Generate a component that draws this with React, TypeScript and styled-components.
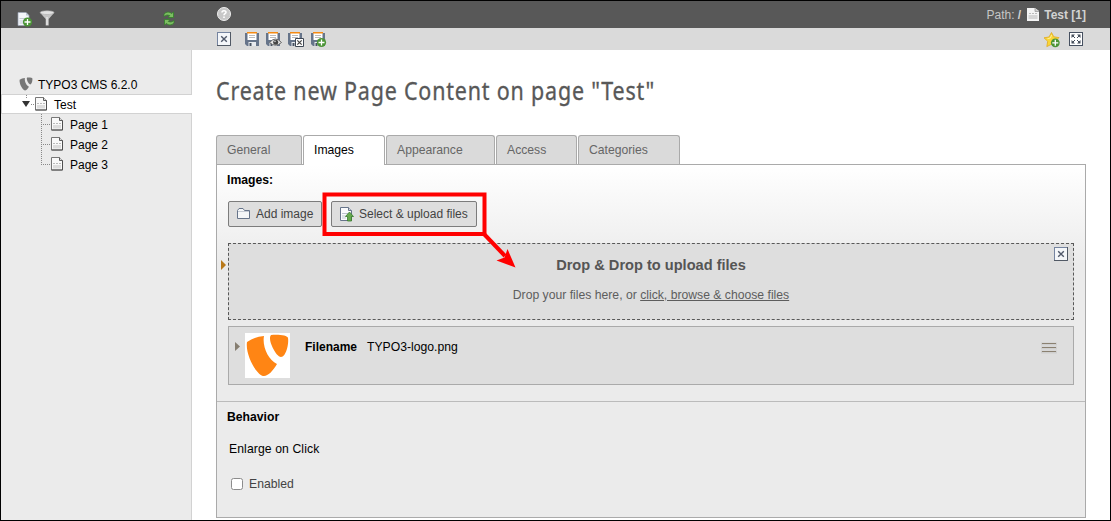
import React from "react";
import styled, { createGlobalStyle } from "styled-components";

const GlobalStyle = createGlobalStyle`
  * { box-sizing: border-box; }
  body { margin: 0; background: #fff; }
  svg { display: block; flex: none; }
`;

const Frame = styled.div`
  position: relative;
  width: 1111px;
  height: 521px;
  border: 1px solid #000;
  display: grid;
  grid-template-columns: 191px 1fr;
  grid-template-rows: 27px 22px 1fr;
  background: #fff;
  overflow: hidden;
  font: 12px/20px "Liberation Sans", Arial, sans-serif;
  color: #000;
`;

const DarkBar = styled.div<{ $left: number; $right: number; $top?: number }>`
  display: flex;
  align-items: flex-start;
  background: #585858;
  color: #c6c6c6;
  padding: ${(p) => p.$top ?? 0}px ${(p) => p.$right}px 0 ${(p) => p.$left}px;
`;

const LightBar = styled(DarkBar)`
  background: #dadada;
`;

const Spacer = styled.div<{ $w?: number }>`
  ${(p) => (p.$w ? `width: ${p.$w}px; flex: none;` : "flex: 1;")}
`;

const PathText = styled.div`
  display: flex;
  height: 27px;
  line-height: 28px;
  b { color: #d2d2d2; }
  svg { margin: 5px 4px 0 5px; }
`;

const Sidebar = styled.nav`
  background: #ebebeb;
  border-right: 1px solid #d2d2d2;
  padding-top: 25px;
`;

const RootRow = styled.div`
  display: flex;
  height: 19px;
  line-height: 20px;
  padding-left: 18px;
  svg { margin: 2px 5px 0 0; }
`;

const ActiveRow = styled.div`
  display: flex;
  height: 20px;
  width: 191px;
  line-height: 20px;
  padding-left: 20px;
  background: #fff;
  border: solid #d2d2d2;
  border-width: 1px 0 1px 1px;
  svg + svg { margin-top: 1px; }
  span { margin-left: 5px; }
`;

const ChildRow = styled.div`
  display: flex;
  height: 20px;
  line-height: 22px;
  padding-left: 40px;
  svg + svg { margin-top: 2px; }
  span { margin-left: 5px; }
`;

const Main = styled.main`
  padding: 0 24px 0 24px;
  font-size: 12.2px;
`;

const Title = styled.h1`
  margin: 0;
  padding-top: 20px;
  height: 85px;
  font: 400 26px/40px "Noto Sans", sans-serif;
  color: #585858;
  white-space: nowrap;
  -webkit-text-stroke: 0.35px #585858;
  span { display: inline-block; transform: scaleX(0.825); transform-origin: 0 0; letter-spacing: 1px; }
`;

const Tabs = styled.div`
  display: flex;
  gap: 1px;
  height: 29px;
`;

const Tab = styled.div<{ $w: number; $active?: boolean }>`
  width: ${(p) => p.$w}px;
  height: ${(p) => (p.$active ? 30 : 29)}px;
  padding-left: 10px;
  line-height: 28px;
  border: 1px solid #aaa;
  border-bottom: 0;
  border-radius: 3px 3px 0 0;
  background: ${(p) => (p.$active ? "#fff" : "#dadada")};
  color: ${(p) => (p.$active ? "#000" : "#666")};
  z-index: 1;
`;

const Panel = styled.div`
  border: 1px solid #aaa;
  height: 354px;
  background: linear-gradient(#fff, #ebebeb 100px);
`;

const Section = styled.section<{ $h: number }>`
  height: ${(p) => p.$h}px;
  padding: 5px 11px 0;
  & + & { border-top: 1px solid #bbb; }
`;

const SectionTitle = styled.div`
  font-weight: bold;
  margin-left: -1px;
`;

const Buttons = styled.div`
  display: flex;
  gap: 9px;
  margin: 11px 0 16px;
`;

const Button = styled.button<{ $w: number }>`
  display: flex;
  align-items: center;
  width: ${(p) => p.$w}px;
  height: 26px;
  padding: 0 0 0 7px;
  font: 12px/20px "Liberation Sans", Arial, sans-serif;
  color: #434343;
  background: #dedede;
  border: 1px solid #7c7c7c;
  border-radius: 2px;
  white-space: nowrap;
  svg { margin-right: 4px; }
`;

const DropZone = styled.div`
  position: relative;
  height: 77px;
  margin-bottom: 6px;
  padding-top: 10px;
  text-align: center;
  color: #5d5d5d;
  background: #dedede;
  border: 1px dashed #585858;
`;

const DropTitle = styled.div`
  font-size: 14.6px;
  font-weight: bold;
  color: #555;
  line-height: 22px;
  margin-bottom: 9px;
`;

const Corner = styled.div`
  position: absolute;
  top: 3px;
  right: 5px;
`;

const DropMarker = styled.div`
  position: absolute;
  left: -8px;
  top: 16px;
`;

const FileRow = styled.div`
  display: flex;
  height: 59px;
  padding: 6px 16px 0 6px;
  line-height: 28px;
  background: #dedede;
  border: 1px solid #aaa;
  b { font-size: 12px; margin: 0 10px 0 15px; }
`;

const Thumb = styled.div`
  width: 45px;
  height: 45px;
  background: #fff;
  margin-left: 5px;
`;

const Label = styled.div`
  margin: 12px 0 15px 1px;
  letter-spacing: 0.1px;
`;

const CheckRow = styled.label`
  display: flex;
  align-items: center;
  color: #434343;
  input { width: 12px; height: 12px; margin: 0 6px 0 3px; appearance: none; border: 1px solid #8c8c8c; border-radius: 2.5px; background: #fff; }
`;

const Annotation = styled.svg`
  position: absolute;
  left: 319px;
  top: 189px;
`;

const Plus = ({ x, y, r = 4.6 }: { x: number; y: number; r?: number }) => (
  <g>
    <circle cx={x} cy={y} r={r} fill="#4b9436" />
    <path d={`M${x - 3} ${y}h6M${x} ${y - 3}v6`} stroke="#fff" strokeWidth="1.3" />
  </g>
);

const PageIcon = () => (
  <svg width="16" height="16">
    <path d="M2.5 1.500h8l3 3v9.500h-11z" fill="#f9f9f9" stroke="#777" />
    <path d="M13.500 4.500v9.500h-11" fill="none" stroke="#505050" />
    <path d="M10.500 1.500v3h3" fill="#ddd" stroke="#5d5d5d" />
    <path d="M4 7.500h8" stroke="#bbb" strokeDasharray="2 1" />
    <path d="M4 9h8v3.500H4z" fill="#ddd" />
  </svg>
);

const PathPageIcon = () => (
  <svg width="14" height="16">
    <path d="M1 2h8l4 3v10H1z" fill="#f4f4f4" />
    <path d="M9 2v3.5h4" fill="#ccc" stroke="#999" strokeWidth=".8" />
    <path d="M3 7.5h8" stroke="#bbb" strokeDasharray="2 1" />
    <path d="M2.500 9h9v4h-9z" fill="#d5d5d5" />
  </svg>
);

const NewPageIcon = () => (
  <svg width="17" height="17">
    <path d="M2 2.500h8l3 3v10H2z" fill="#f3f5f9" stroke="#9aa4b5" strokeWidth=".7" />
    <path d="M10 2.500v3h3" fill="#bcc5d3" />
    <path d="M3.500 8.500h7" stroke="#c2c9d3" /><path d="M3.500 10h5v4h-5z" fill="#dbe0e8" />
    <Plus x={11.5} y={12} r={4.6} />
  </svg>
);

const FilterIcon = () => (
  <svg width="16" height="16">
    <path d="M1.300 3 6.700 9v6.500h3V9l5.200-6z" fill="#c4c4c4" />
    <ellipse cx="8.100" cy="2.600" rx="6.900" ry="1.900" fill="#e2e2e2" stroke="#aaa" strokeWidth=".6" />
    <path d="M8 7v8" stroke="#f1f1f1" />
  </svg>
);

const RefreshIcon = () => (
  <svg width="12" height="16">
    <path d="M1 6.500V4.500Q2 2 5 2q2.300 0 3.500 1.500L10.500 2v5.500H5L6.700 5.500Q4 4 1 6.500z" fill="#7cbd62" stroke="#34802a" strokeWidth=".8" />
    <path d="M11 10.500v2Q10 15 7 15q-2.300 0-3.500-1.500L1.500 15V9.500H7l-1.700 2Q8 13 11 10.500z" fill="#7cbd62" stroke="#34802a" strokeWidth=".8" />
  </svg>
);

const HelpIcon = () => (
  <svg width="14" height="14">
    <circle cx="7" cy="7" r="6.500" fill="#c8c8c8" stroke="#eee" />
    <path d="M5 5.600C5 3.200 9 3.200 9 5.300 9 6.700 7 6.700 7 8.300M7 9.600v1.400" fill="none" stroke="#fff" strokeWidth="1.600" />
  </svg>
);

const CloseIcon = () => (
  <svg width="14" height="14">
    <rect x=".5" y=".5" width="13" height="13" fill="#f4f6f9" stroke="#7584a0" />
    <path d="M13.500 0v13.500H0" fill="none" stroke="#515965" />
    <path d="m4.200 4.200 5.600 5.600m0-5.600L4.200 9.800" stroke="#50586a" strokeWidth="1.400" />
  </svg>
);

const SaveIcon = ({ kind }: { kind?: "view" | "close" | "new" }) => (
  <svg width="17" height="16">
    <path d="M0 1h14v13H2l-2-2z" fill="#66748a" />
    <path d="M2.500 1h9v7h-9z" fill="#fff" />
    <path d="M2 0h10v1.500H2z" fill="#f58a12" />
    <path d="M4 3.500h6M4 5.500h6" stroke="#bbb" />
    <path d="M3.500 10h7.500v4H3.500z" fill="#e8ebef" />
    <path d="M4.500 11h2v3h-2z" fill="#465160" />
    {kind === "view" && (
      <g>
        <path d="M3.500 10.500Q9.500 3.500 15.500 10.500 9.500 16 3.500 10.500z" fill="#e7e7e7" stroke="#666" />
        <circle cx="9.700" cy="10.200" r="2.500" fill="#444" />
        <circle cx="9" cy="9.400" r=".8" fill="#ccc" />
      </g>
    )}
    {kind === "close" && (
      <g>
        <path d="M7.500 6.500h8v8h-8z" fill="#fff" stroke="#3f4855" />
        <path d="m9.300 8.300 4.400 4.400m0-4.400-4.400 4.400" stroke="#444" strokeWidth="1.200" />
      </g>
    )}
    {kind === "new" && <Plus x={10.5} y={10.5} />}
  </svg>
);

const StarIcon = () => (
  <svg width="17" height="16">
    <path d="m7.500.5 2.300 4.300 5.200.8-3.700 3.700.9 5.100-4.700-2.100-4.700 2.300.9-5.300L0 5.800l5-.8z" fill="#f9d638" stroke="#e0a920" strokeWidth=".8" />
    <path d="m7.500 3-1 3-3 .6" fill="none" stroke="#fff0a0" />
    <Plus x={11.3} y={10.8} r={4.4} />
  </svg>
);

const ExpandIcon = () => (
  <svg width="14" height="14">
    <rect x=".5" y=".5" width="13" height="13" fill="#fff" stroke="#465060" />
    <path d="M2.500 2.500H6L2.500 6zM11.500 2.500V6L8 2.500zM2.500 11.500V8L6 11.500zM11.500 11.500H8L11.500 8z" fill="#404956" />
    <path d="m3 3 3 3m5-3-3 3m-5 5 3-3m5 3-3-3" stroke="#404956" />
  </svg>
);

const TypoMark = ({ size, color }: { size: number; color: string }) => (
  <svg width={size} height={size} viewBox="0 0 45 45" fill={color}>
    <path d="M2 9Q9 4 19 3C17 13 23 27 32 31 28 38 23 43 19 43 12 43 0 22 2 9z" />
    <path d="M26 2C32 1 43 2 43 5 44 11 41 24 36 24 31 24 22 6 26 2z" />
  </svg>
);

const RootGuide = () => (
  <svg width="11" height="20" overflow="visible">
    <path d="M4.500 0v4M9 9.500h4" stroke="#888" strokeDasharray="1 1" />
    <path d="M0 6h8l-4 6z" fill="#333" />
  </svg>
);

const ChildGuide = ({ last }: { last?: boolean }) => (
  <svg width="8" height="20" overflow="visible">
    <path d={`M.5 0v${last ? 10 : 20}M0 10.500h9`} stroke="#888" strokeDasharray="1 1" />
  </svg>
);

const FolderIcon = () => (
  <svg width="16" height="16">
    <path d="M1.500 12.500v-8L3 2.500h4l1.500 2h5v8z" fill="#f4f6f8" stroke="#66748a" />
    <path d="M2 5.500h11" stroke="#c4cad4" />
  </svg>
);

const UploadIcon = () => (
  <svg width="16" height="16">
    <path d="M1.500 1.500h8l3 3v10h-11z" fill="#f9fafc" stroke="#66748a" />
    <path d="M9.500 1.500v3h3" fill="#cdd4dd" stroke="#66748a" />
    <path d="M3 7.500h6" stroke="#bbc3ce" /><path d="M3 9h4v4H3z" fill="#dce1e7" />
    <path d="m10.500 6 4 4.500h-2v4.500h-4v-4.500h-2z" fill="#65a94d" stroke="#397b2d" strokeWidth=".8" />
  </svg>
);

const Triangle = ({ color, h }: { color: string; h: number }) => (
  <svg width="5" height={h}><path d={`M0 0l5 ${h / 2}-5 ${h / 2}z`} fill={color} /></svg>
);

const MenuIcon = () => (
  <svg width="16" height="12">
    <path d="M0 2h16M0 6h16M0 10h16" stroke="#cfcfcf" strokeWidth="3" />
    <path d="M1 1.500h14M1 5.500h14M1 9.500h14" stroke="#8b8171" />
  </svg>
);

const tabs = [
  { name: "General", w: 86 },
  { name: "Images", w: 82 },
  { name: "Appearance", w: 109 },
  { name: "Access", w: 81 },
  { name: "Categories", w: 102 },
];

const children = ["Page 1", "Page 2", "Page 3"];

export default function App() {
  return (
    <>
      <GlobalStyle />
      <Frame>
        <DarkBar $left={15} $right={17} $top={9}>
          <NewPageIcon />
          <Spacer $w={6} />
          <FilterIcon />
          <Spacer />
          <RefreshIcon />
        </DarkBar>
        <DarkBar $left={25} $right={24}>
          <svg width="14" height="20"><g transform="translate(0 6)"><HelpIcon /></g></svg>
          <Spacer />
          <PathText>
            Path:&nbsp;<b>/</b>
            <PathPageIcon />
            <b>Test [1]</b>
          </PathText>
        </DarkBar>
        <LightBar $left={0} $right={0} />
        <LightBar $left={25} $right={27} $top={4}>
          <CloseIcon />
          <Spacer $w={14} />
          <SaveIcon />
          <Spacer $w={4} />
          <SaveIcon kind="view" />
          <Spacer $w={5} />
          <SaveIcon kind="close" />
          <Spacer $w={6} />
          <SaveIcon kind="new" />
          <Spacer />
          <StarIcon />
          <Spacer $w={8} />
          <ExpandIcon />
        </LightBar>
        <Sidebar>
          <RootRow>
            <TypoMark size={14} color="#777" />
            TYPO3 CMS 6.2.0
          </RootRow>
          <ActiveRow>
            <RootGuide />
            <PageIcon />
            <span>Test</span>
          </ActiveRow>
          {children.map((name, i) => (
            <ChildRow key={name}>
              <ChildGuide last={i === children.length - 1} />
              <PageIcon />
              <span>{name}</span>
            </ChildRow>
          ))}
        </Sidebar>
        <Main>
          <Title><span>Create new Page Content on page "Test"</span></Title>
          <Tabs>
            {tabs.map((t) => (
              <Tab key={t.name} $w={t.w} $active={t.name === "Images"}>{t.name}</Tab>
            ))}
          </Tabs>
          <Panel>
            <Section $h={236}>
              <SectionTitle>Images:</SectionTitle>
              <Buttons>
                <Button $w={94}><FolderIcon />Add image</Button>
                <Button $w={146}><UploadIcon />Select &amp; upload files</Button>
              </Buttons>
              <DropZone>
                <DropMarker><Triangle color="#b97a1b" h={10} /></DropMarker>
                <Corner><CloseIcon /></Corner>
                <DropTitle>Drop &amp; Drop to upload files</DropTitle>
                Drop your files here, or <u>click, browse &amp; choose files</u>
              </DropZone>
              <FileRow>
                <svg width="5" height="28"><g transform="translate(0 9)"><Triangle color="#857d70" h={9} /></g></svg>
                <Thumb><TypoMark size={45} color="#ff8514" /></Thumb>
                <b>Filename</b>
                TYPO3-logo.png
                <Spacer />
                <svg width="16" height="28"><g transform="translate(0 9)"><MenuIcon /></g></svg>
              </FileRow>
            </Section>
            <Section $h={116}>
              <SectionTitle>Behavior</SectionTitle>
              <Label>Enlarge on Click</Label>
              <CheckRow><input type="checkbox" />Enabled</CheckRow>
            </Section>
          </Panel>
        </Main>
        <Annotation width="205" height="85">
          <rect x="4.500" y="4.500" width="160" height="39.500" fill="none" stroke="#f00" strokeWidth="4" />
          <path d="M164 44l21 22" stroke="#f00" strokeWidth="4" />
          <path d="M195.500 77.500 176.500 70.500 184.500 67.500 187.500 59z" fill="#f00" />
        </Annotation>
      </Frame>
    </>
  );
}
